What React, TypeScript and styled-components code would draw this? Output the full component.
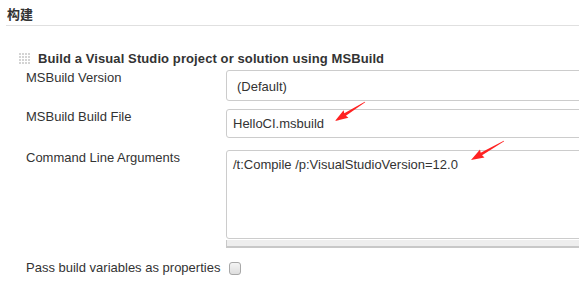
import React from "react";
import styled, { createGlobalStyle } from "styled-components";

const Global = createGlobalStyle`
  html, body { margin: 0; padding: 0; background: #fff; }
  body {
    font-family: "Liberation Sans", Arial, "Noto Sans CJK SC", sans-serif;
    font-size: 13px;
    color: #333;
    overflow: hidden;
  }
`;

const Page = styled.div`
  position: relative;
  width: 579px;
  height: 299px;
  overflow: hidden;
`;

const SectionHeader = styled.div`
  margin-left: 6px;
  padding: 7px 0 2px 1px;
  line-height: 16px;
  font-family: "Liberation Sans", "Noto Sans CJK SC", sans-serif;
  font-weight: bold;
  font-size: 13px;
  color: #333;
  border-bottom: 1px solid #e0e0e0;
`;

const TitleRow = styled.div`
  display: flex;
  align-items: center;
  gap: 8px;
  margin: 25px 0 0 19px;
  line-height: 15px;
`;

const Grip = styled.svg`
  display: block;
  width: 11px;
  height: 11px;
  flex: none;
`;

const Title = styled.div`
  font-weight: bold;
  font-size: 13px;
  letter-spacing: 0.1px;
  color: #333;
  white-space: nowrap;
`;

const Form = styled.div`
  margin-left: 26px;
`;

const Row = styled.div<{ $top: number }>`
  display: grid;
  grid-template-columns: 200px 420px;
  margin-top: ${(p) => p.$top}px;
  align-items: start;
`;

const Label = styled.div`
  line-height: 15px;
  white-space: nowrap;
`;

const SelectBox = styled.div`
  box-sizing: border-box;
  height: 31px;
  display: flex;
  align-items: center;
  padding: 2px 0 0 10px;
  border: 1px solid #ccc;
  border-radius: 3px;
  background: #fff;
`;

const TextBox = styled.div`
  box-sizing: border-box;
  height: 29px;
  display: flex;
  align-items: center;
  padding: 0 0 0 6px;
  border: 1px solid #ccc;
  border-radius: 3px;
  background: #fff;
`;

const AreaWrap = styled.div`
  display: flex;
  flex-direction: column;
`;

const TextArea = styled.div`
  box-sizing: border-box;
  height: 89px;
  padding: 6px 0 0 6px;
  line-height: 15px;
  border: 1px solid #ccc;
  border-radius: 3px;
  background: #fff;
`;

const ResizeBar = styled.div`
  margin-top: 1px;
  height: 6px;
  background: #eeeeee;
  border-left: 1px solid #c8c8c8;
  border-bottom: 2px solid #c8c8c8;
`;

const CheckRow = styled.div`
  display: flex;
  align-items: center;
  gap: 9px;
  margin: 12px 0 0 26px;
  line-height: 15px;
`;

const CheckBox = styled.span`
  display: block;
  box-sizing: border-box;
  width: 12px;
  height: 13px;
  margin-top: 2px;
  border: 1px solid #a8a8a8;
  border-radius: 3px;
  background: linear-gradient(#f4f4f4, #dedede);
`;

const Overlay = styled.svg`
  position: absolute;
  left: 0;
  top: 0;
  width: 579px;
  height: 299px;
  pointer-events: none;
`;

type Pt = [number, number];

function arrowPoints(tail: Pt, tip: Pt): string {
  const dx = tip[0] - tail[0];
  const dy = tip[1] - tail[1];
  const len = Math.hypot(dx, dy);
  const ux = dx / len;
  const uy = dy / len;
  const nx = -uy;
  const ny = ux;
  const headLen = 12;
  const headW = 4.5;
  const shaftW = 1.5;
  const bx = tip[0] - ux * headLen;
  const by = tip[1] - uy * headLen;
  const pts: Pt[] = [
    [tail[0] + nx * 0.4, tail[1] + ny * 0.4],
    [bx + nx * shaftW, by + ny * shaftW],
    [bx + nx * headW - ux * 1, by + ny * headW - uy * 1],
    tip,
    [bx - nx * headW - ux * 1, by - ny * headW - uy * 1],
    [bx - nx * shaftW, by - ny * shaftW],
    [tail[0] - nx * 0.4, tail[1] - ny * 0.4],
  ];
  return pts.map((p) => `${p[0].toFixed(1)},${p[1].toFixed(1)}`).join(" ");
}

const Arrow: React.FC<{ tail: Pt; tip: Pt }> = ({ tail, tip }) => (
  <polygon points={arrowPoints(tail, tip)} fill="#f22" />
);

const GripIcon = () => {
  const dots = [];
  for (let r = 0; r < 4; r++) {
    for (let c = 0; c < 4; c++) {
      dots.push(<rect key={`${r}-${c}`} x={c * 3} y={r * 3} width={2} height={2} fill="#d4d4d4" />);
    }
  }
  return (
    <Grip viewBox="0 0 11 11">
      {dots}
    </Grip>
  );
};

export default function App() {
  return (
    <Page>
      <Global />
      <SectionHeader>构建</SectionHeader>
      <TitleRow>
        <GripIcon />
        <Title>Build a Visual Studio project or solution using MSBuild</Title>
      </TitleRow>
      <Form>
        <Row $top={4}>
          <Label>MSBuild Version</Label>
          <SelectBox>(Default)</SelectBox>
        </Row>
        <Row $top={8}>
          <Label>MSBuild Build File</Label>
          <TextBox>HelloCI.msbuild</TextBox>
        </Row>
        <Row $top={12}>
          <Label>Command Line Arguments</Label>
          <AreaWrap>
            <TextArea>/t:Compile /p:VisualStudioVersion=12.0</TextArea>
            <ResizeBar />
          </AreaWrap>
        </Row>
      </Form>
      <CheckRow>
        <Label>Pass build variables as properties</Label>
        <CheckBox />
      </CheckRow>
      <Overlay viewBox="0 0 579 299">
        <Arrow tail={[365, 102]} tip={[335, 121]} />
        <Arrow tail={[504, 141]} tip={[471, 160]} />
      </Overlay>
    </Page>
  );
}
